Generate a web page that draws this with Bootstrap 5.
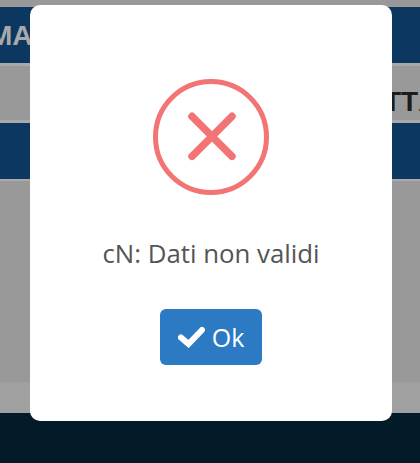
<!DOCTYPE html>
<html lang="it">
<head>
<meta charset="utf-8">
<title>Errore</title>
<link href="https://cdn.jsdelivr.net/npm/bootstrap@5.3.0/dist/css/bootstrap.min.css" rel="stylesheet">
<style>
html,body{height:463px;overflow:hidden;margin:0}
body{position:relative;background:#fff;font-family:"Liberation Sans",Arial,sans-serif}
.pg-top{height:7px;background:#999}
.pg-band{overflow:hidden;white-space:nowrap;font-weight:700;font-size:28px}
.pg-blue{height:56px;background:#0c3761;color:#a9a9a9;line-height:58px}
.pg-gray{height:54px;background:#999;color:#1c1c1c;line-height:71px}
.pg-line{height:3px;background:#aaa}
.pg-line-thin{height:2px;background:#aaa}
.pg-rest{height:201px;background:#999}
.pg-pale{height:31px;background:#a0a0a0}
.pg-foot{height:50px;background:#031b29}
.pg-title-left{margin-left:-11px}
.pg-title-right{margin-left:384px;font-kerning:none}
.dlg{position:absolute;left:30px;top:5px;width:362px;height:416px;background:#fff;border-radius:10px;padding-top:74px}
.dlg-icon{display:block;width:116px;height:116px}
.dlg-msg{font-family:"Open Sans","Noto Sans",sans-serif;font-size:25.8px;line-height:33px;color:#555;margin-top:42px}
.dlg-btn{background:#2c79c4;border:0;border-radius:6px;color:#fff;font-family:"Open Sans","Noto Sans",sans-serif;font-size:25px;line-height:32px;width:102px;height:56px;margin-top:39px;padding:0;gap:7px}
.dlg-btn:hover,.dlg-btn:focus{background:#2c79c4;color:#fff}
.dlg-btn svg{width:27px;height:22px}
</style>
</head>
<body>
<div>
  <div class="pg-top"></div>
  <div class="pg-band pg-blue"><span class="pg-title-left d-inline-block">MA</span></div>
  <div class="pg-line"></div>
  <div class="pg-band pg-gray"><span class="pg-title-right d-inline-block">TTA</span></div>
  <div class="pg-line"></div>
  <div class="pg-band pg-blue"></div>
  <div class="pg-line-thin"></div>
  <div class="pg-rest"></div>
  <div class="pg-pale"></div>
  <div class="pg-foot"></div>
</div>
<div class="dlg d-flex flex-column align-items-center text-center" role="dialog">
  <svg class="dlg-icon" viewBox="0 0 116 116" aria-hidden="true">
    <circle cx="58" cy="58" r="55.5" fill="none" stroke="#f27474" stroke-width="5"/>
    <path d="M39 37.3L79 77.3M79 37.3L39 77.3" fill="none" stroke="#f27474" stroke-width="7.5" stroke-linecap="round"/>
  </svg>
  <div class="dlg-msg">cN: Dati non validi</div>
  <button type="button" class="btn dlg-btn d-inline-flex align-items-center justify-content-center">
    <svg viewBox="0 0 27 22" aria-hidden="true"><path d="M3 11.5L10.5 18L24 4" fill="none" stroke="#fff" stroke-width="6" stroke-linejoin="miter" stroke-linecap="round"/></svg>
    <span>Ok</span>
  </button>
</div>
<script src="https://cdn.jsdelivr.net/npm/bootstrap@5.3.0/dist/js/bootstrap.bundle.min.js"></script>
</body>
</html>
